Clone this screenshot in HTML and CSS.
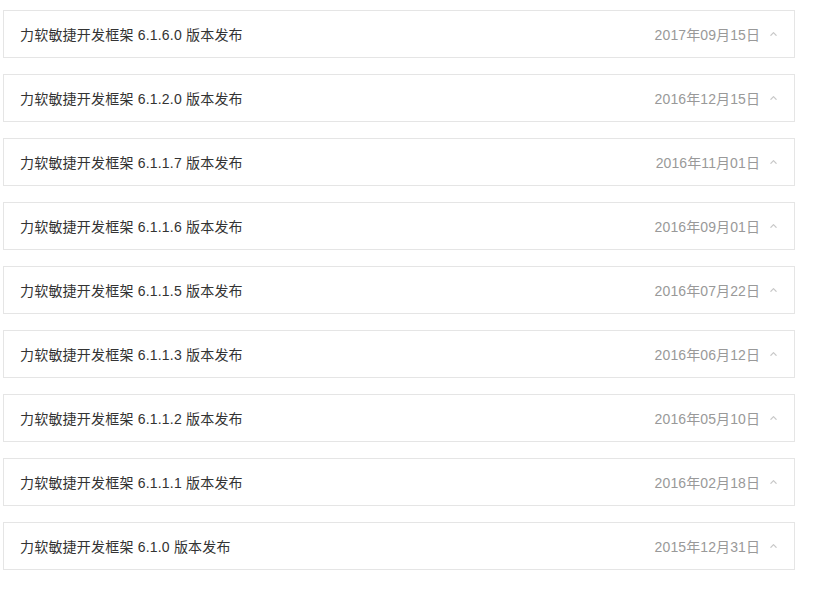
FILE: index.html
```html
<!DOCTYPE html>
<html>
  <head>
    <title>版本发布</title>
    <meta charset="utf-8">
    <link rel="stylesheet" href="styles.css">
  </head>
  <body>
    <div class="release-list">
      <div class="release-item">
        <span class="release-title">力软敏捷开发框架 6.1.6.0 版本发布</span>
        <span class="release-date">2017年09月15日</span>
        <svg class="caret" width="7" height="4" viewBox="0 0 7 4"><path d="M0.5 3.7 L3.5 0.7 L6.5 3.7" /></svg>
      </div>
      <div class="release-item">
        <span class="release-title">力软敏捷开发框架 6.1.2.0 版本发布</span>
        <span class="release-date">2016年12月15日</span>
        <svg class="caret" width="7" height="4" viewBox="0 0 7 4"><path d="M0.5 3.7 L3.5 0.7 L6.5 3.7" /></svg>
      </div>
      <div class="release-item">
        <span class="release-title">力软敏捷开发框架 6.1.1.7 版本发布</span>
        <span class="release-date">2016年11月01日</span>
        <svg class="caret" width="7" height="4" viewBox="0 0 7 4"><path d="M0.5 3.7 L3.5 0.7 L6.5 3.7" /></svg>
      </div>
      <div class="release-item">
        <span class="release-title">力软敏捷开发框架 6.1.1.6 版本发布</span>
        <span class="release-date">2016年09月01日</span>
        <svg class="caret" width="7" height="4" viewBox="0 0 7 4"><path d="M0.5 3.7 L3.5 0.7 L6.5 3.7" /></svg>
      </div>
      <div class="release-item">
        <span class="release-title">力软敏捷开发框架 6.1.1.5 版本发布</span>
        <span class="release-date">2016年07月22日</span>
        <svg class="caret" width="7" height="4" viewBox="0 0 7 4"><path d="M0.5 3.7 L3.5 0.7 L6.5 3.7" /></svg>
      </div>
      <div class="release-item">
        <span class="release-title">力软敏捷开发框架 6.1.1.3 版本发布</span>
        <span class="release-date">2016年06月12日</span>
        <svg class="caret" width="7" height="4" viewBox="0 0 7 4"><path d="M0.5 3.7 L3.5 0.7 L6.5 3.7" /></svg>
      </div>
      <div class="release-item">
        <span class="release-title">力软敏捷开发框架 6.1.1.2 版本发布</span>
        <span class="release-date">2016年05月10日</span>
        <svg class="caret" width="7" height="4" viewBox="0 0 7 4"><path d="M0.5 3.7 L3.5 0.7 L6.5 3.7" /></svg>
      </div>
      <div class="release-item">
        <span class="release-title">力软敏捷开发框架 6.1.1.1 版本发布</span>
        <span class="release-date">2016年02月18日</span>
        <svg class="caret" width="7" height="4" viewBox="0 0 7 4"><path d="M0.5 3.7 L3.5 0.7 L6.5 3.7" /></svg>
      </div>
      <div class="release-item">
        <span class="release-title">力软敏捷开发框架 6.1.0 版本发布</span>
        <span class="release-date">2015年12月31日</span>
        <svg class="caret" width="7" height="4" viewBox="0 0 7 4"><path d="M0.5 3.7 L3.5 0.7 L6.5 3.7" /></svg>
      </div>
    </div>
  </body>
</html>
```

FILE: styles.css
```css
* {box-sizing: border-box;}

html {
  background-color: #fff;
}

body {
  margin: 0;
  font-family: "Liberation Sans", "Noto Sans CJK SC", sans-serif;
  font-size: 14px;
}

.release-list {
  display: flex;
  flex-direction: column;
  gap: 16px;
  width: 792px;
  margin: 10px 0 0 3px;
}

.release-item {
  display: flex;
  align-items: center;
  height: 48px;
  padding: 0 17px 0 16px;
  border: 1px solid #e5e5e5;
  background-color: #fff;
}

.release-title {
  flex: 1;
  color: #333;
  letter-spacing: 0.2px;
}

.release-date {
  color: #999;
  letter-spacing: 0.1px;
}

.caret {
  margin-left: 10px;
  margin-top: -1px;
  fill: none;
  stroke: #c8c8c8;
  stroke-width: 1.2;
}
```
